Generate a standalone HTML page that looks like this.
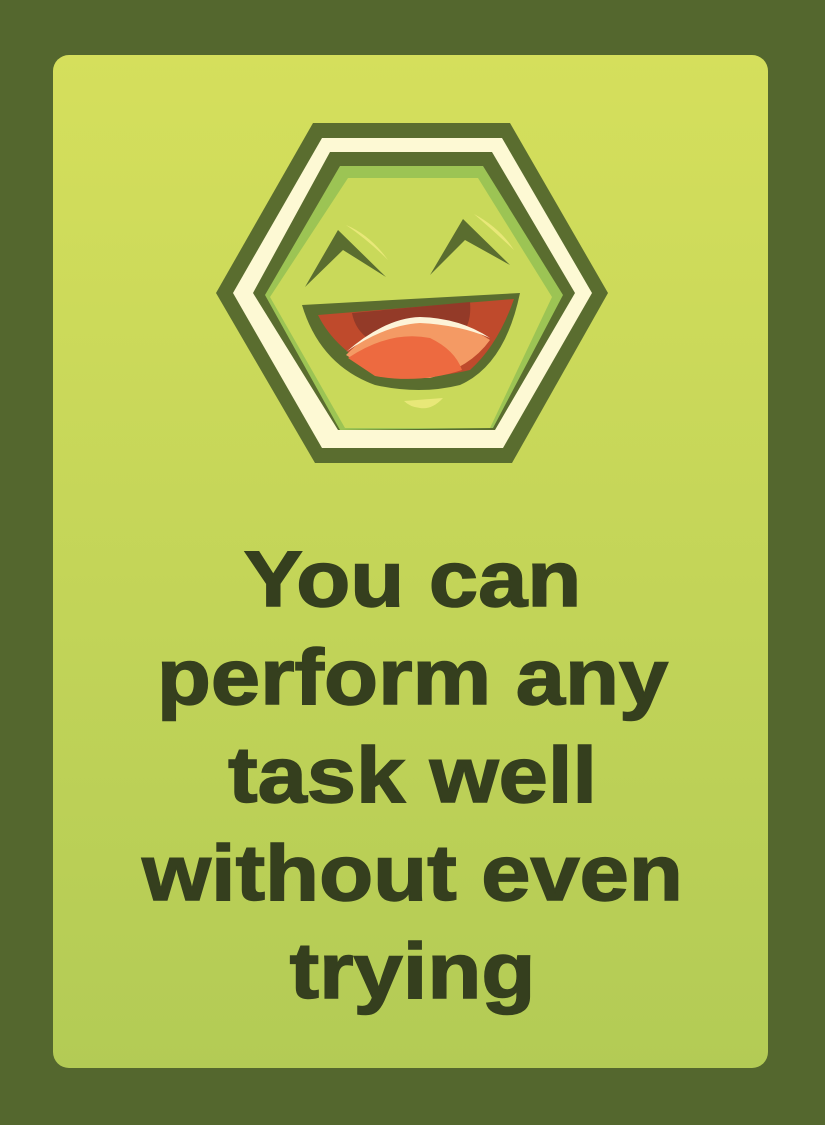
<!DOCTYPE html>
<html><head><meta charset="utf-8"><style>
html,body{margin:0;padding:0;}
body{width:825px;height:1125px;background:#54672e;position:relative;overflow:hidden;}
.card{position:absolute;left:53px;top:55px;width:715px;height:1013px;border-radius:16px;background:linear-gradient(#d5df5c,#b3cb55);}
svg{position:absolute;left:0;top:0;}
.t{position:absolute;left:0;width:825px;top:530px;text-align:center;font-family:"Liberation Sans",sans-serif;font-weight:bold;font-size:79px;line-height:98px;color:#353f1e;transform:scaleX(1.12);transform-origin:412px 0;-webkit-text-stroke:1.5px #353f1e;}
</style></head><body>
<div class="card"></div>
<svg width="825" height="1125" viewBox="0 0 825 1125">
<polygon points="313,123 510,123 608,293 512,463 315,463 216,293" fill="#5a6d2f"/>
<polygon points="322,138 502,138 592,293 503,448 322,448 233,293" fill="#fdf9d4"/>
<polygon points="330,152 492,152 575,293 495,430 338,430 253,293" fill="#5a6d2f"/>
<polygon points="340,166 483,166 563,295 493,428 340,430 265,295" fill="#9cc454"/>
<polygon points="348,178 478,178 552,297 490,428 345,428 270,297" fill="#c9d95a"/>
<polygon points="305,287 338,230 386,277 343,250" fill="#5a6d2f"/>
<polygon points="430,275 463,219 510,265 465,240" fill="#5a6d2f"/>
<path d="M346,225 Q370,235 388,260 Q368,240 346,225Z" fill="#e8e878"/>
<path d="M474,214 Q500,228 514,250 Q495,232 474,214Z" fill="#e8e878"/>
<path d="M302,305 L520,293 Q505,365 460,385 Q420,395 375,385 Q320,365 302,305Z" fill="#5a6d2f"/>
<path d="M318,315 L514,299 Q498,345 470,370 Q420,382 380,372 Q335,350 318,315Z" fill="#bf4a2c"/>
<path d="M352,313 L470,302 Q472,325 460,335 Q410,340 370,340 Q355,330 352,313Z" fill="#933a28"/>
<path d="M346,355 Q380,320 420,318 Q460,320 490,340 Q470,368 430,378 Q380,378 346,355Z" fill="#f49a64"/>
<path d="M348,358 Q390,330 430,338 Q455,350 462,370 Q420,384 375,376Z" fill="#ed6a40"/>
<path d="M346,352 Q385,318 420,317 Q460,318 490,338 Q460,325 420,323 Q385,325 346,352Z" fill="#fdf3d8"/>
<path d="M404,401 L443,398 Q432,410 420,408 Q410,407 404,401Z" fill="#e8e878"/>
</svg>
<div class="t">You can<br>perform any<br>task well<br>without even<br>trying</div>
</body></html>
